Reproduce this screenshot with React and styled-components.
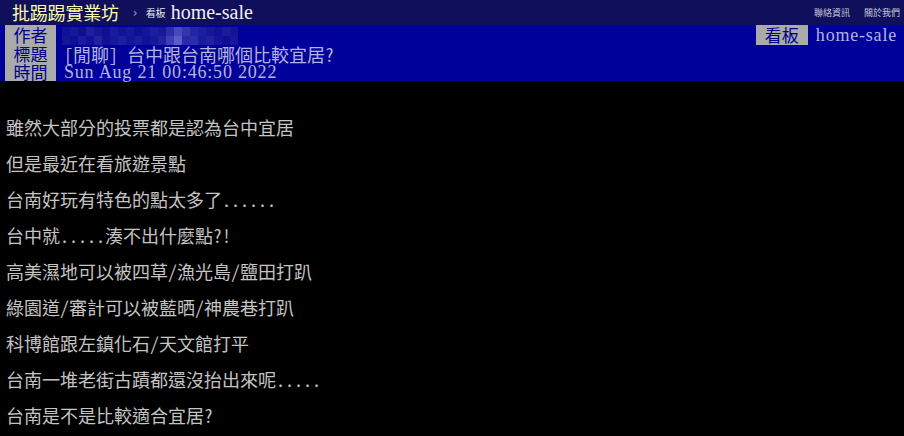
import styled, { createGlobalStyle } from "styled-components"

const GlobalStyle = createGlobalStyle`
    html, body {
        margin:0;
        padding:0;
        background-color:#000;
    }
    body {
        font-family:"Noto Sans CJK TC", sans-serif;
    }
`

const lines = [
    "雖然大部分的投票都是認為台中宜居",
    "但是最近在看旅遊景點",
    "台南好玩有特色的點太多了......",
    "台中就.....湊不出什麼點?!",
    "高美濕地可以被四草/漁光島/鹽田打趴",
    "綠園道/審計可以被藍晒/神農巷打趴",
    "科博館跟左鎮化石/天文館打平",
    "台南一堆老街古蹟都還沒抬出來呢.....",
    "台南是不是比較適合宜居?",
]

// blurred author name, two rows of blocks
const mosaic = [
    [22, 30, 18, 40, 28, 20, 34, 24, 30, 20, 26, 38, 30, 60, 96, 70, 48, 40, 30, 22, 34, 26],
    [26, 20, 36, 24, 44, 22, 30, 40, 26, 34, 22, 30, 44, 80, 120, 56, 60, 36, 44, 28, 20, 30],
]

const shade = (v) => `rgb(${v * 0.75}, ${v * 0.75}, ${140 + v * 0.5})`

const App = () => {
    return (
        <>
            <GlobalStyle />
            <Page>
                <TopBar>
                    <Logo>批踢踢實業坊</Logo>
                    <Crumb>›</Crumb>
                    <BoardLabel>看板</BoardLabel>
                    <BoardName>home-sale</BoardName>
                    <RightLinks>
                        <span>聯絡資訊</span>
                        <span>關於我們</span>
                    </RightLinks>
                </TopBar>

                <MetaBox>
                    <MetaLine>
                        <Tag>作者</Tag>
                        <Mosaic>
                            {mosaic.map((row, r) => (
                                <MosaicRow key={r}>
                                    {row.map((v, c) => (
                                        <Cell key={c} style={{ background: shade(v) }} />
                                    ))}
                                </MosaicRow>
                            ))}
                        </Mosaic>
                        <RightMeta>
                            <Tag $wide>看板</Tag>
                            <Value $latin>home-sale</Value>
                        </RightMeta>
                    </MetaLine>
                    <MetaLine>
                        <Tag>標題</Tag>
                        <Value>[閒聊] 台中跟台南哪個比較宜居?</Value>
                    </MetaLine>
                    <MetaLine>
                        <Tag>時間</Tag>
                        <Value $latin>Sun Aug 21 00:46:50 2022</Value>
                    </MetaLine>
                </MetaBox>

                <Content>
                    {lines.map((l, i) => (
                        <Line key={i}>{l}</Line>
                    ))}
                </Content>
            </Page>
        </>
    )
}

const Page = styled.div`
    width:904px;
    height:436px;
    overflow:hidden;
    background-color:#000;
`

const TopBar = styled.div`
    height:25px;
    background-color:#0f0f5c;
    display:flex;
    align-items:center;
    padding-left:12px;
    box-sizing:border-box;
`

const Logo = styled.div`
    color:#ffffa6;
    font-size:18px;
    line-height:25px;
    letter-spacing:-0.2px;
`

const Crumb = styled.span`
    color:#a0a0b8;
    font-family:"DejaVu Sans", sans-serif;
    font-size:12px;
    margin-left:14px;
`

const BoardLabel = styled.span`
    color:#e8e8f0;
    font-size:10px;
    margin-left:8px;
`

const BoardName = styled.span`
    color:#f0f0f0;
    font-family:"Liberation Serif", serif;
    font-size:20px;
    margin-left:5px;
    line-height:25px;
`

const RightLinks = styled.div`
    margin-left:auto;
    display:flex;
    gap:14px;
    padding-right:4px;
    span{
        color:#c8c8d8;
        font-size:9px;
    }
`

const MetaBox = styled.div`
    background-color:#00009a;
    padding-left:5px;
    display:flex;
    flex-direction:column;
    height:56px;
`

const MetaLine = styled.div`
    display:flex;
    align-items:stretch;
    height:18px;
    &:first-child{
        height:20px;
    }
`

const Tag = styled.div`
    background-color:#aaaaaa;
    color:#000088;
    font-size:17px;
    line-height:18px;
    width:${(p) => (p.$wide ? "52px" : "51px")};
    text-align:center;
    flex-shrink:0;
    display:flex;
    align-items:center;
    justify-content:center;
`

const Value = styled.div`
    color:#b4b4e0;
    font-family:"Noto Sans Mono CJK TC", "Noto Sans CJK TC", monospace;
    font-size:18px;
    line-height:18px;
    padding-left:8px;
    white-space:nowrap;
    display:flex;
    align-items:center;
    ${(p) => p.$latin && `
        font-family:"Liberation Serif", serif;
        letter-spacing:0.8px;
    `}
`

const Mosaic = styled.div`
    margin-left:6px;
    margin-top:2px;
    display:flex;
    flex-direction:column;
`

const MosaicRow = styled.div`
    display:flex;
    height:9px;
`

const Cell = styled.div`
    width:8px;
    height:9px;
`

const RightMeta = styled.div`
    margin-left:auto;
    display:flex;
    padding-right:7px;
`

const Content = styled.div`
    padding:28px 0 0 6px;
`

const Line = styled.div`
    color:#c4c4c4;
    font-family:"Noto Sans Mono CJK TC", "Noto Sans CJK TC", monospace;
    font-size:18px;
    line-height:36px;
    height:36px;
    white-space:nowrap;
`

export default App
